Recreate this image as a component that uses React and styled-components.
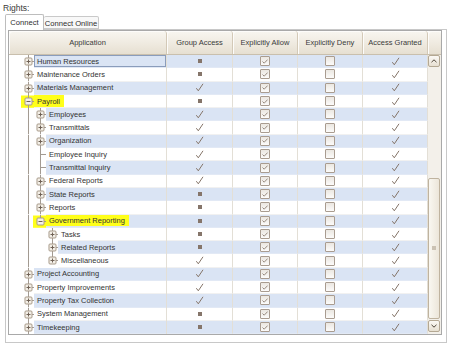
import React from "react";
import styled, { createGlobalStyle } from "styled-components";

const ROW_H = 13.3;

const rows = [
  { name: "Human Resources", level: 0, node: "plus", group: "part", focus: true },
  { name: "Maintenance Orders", level: 0, node: "plus", group: "part" },
  { name: "Materials Management", level: 0, node: "plus", group: "full" },
  { name: "Payroll", level: 0, node: "minus", group: "part", marked: true },
  { name: "Employees", level: 1, node: "plus", group: "full", guides: [true] },
  { name: "Transmittals", level: 1, node: "plus", group: "full", guides: [true] },
  { name: "Organization", level: 1, node: "plus", group: "full", guides: [true] },
  { name: "Employee Inquiry", level: 1, node: "leaf", group: "full", guides: [true] },
  { name: "Transmittal Inquiry", level: 1, node: "leaf", group: "full", guides: [true] },
  { name: "Federal Reports", level: 1, node: "plus", group: "full", guides: [true] },
  { name: "State Reports", level: 1, node: "plus", group: "part", guides: [true] },
  { name: "Reports", level: 1, node: "plus", group: "part", guides: [true] },
  { name: "Government Reporting", level: 1, node: "minus", group: "part", guides: [true], marked: true, last: true },
  { name: "Tasks", level: 2, node: "plus", group: "part", guides: [true, false] },
  { name: "Related Reports", level: 2, node: "plus", group: "part", guides: [true, false] },
  { name: "Miscellaneous", level: 2, node: "plus", group: "full", guides: [true, false], last: true },
  { name: "Project Accounting", level: 0, node: "plus", group: "full" },
  { name: "Property Improvements", level: 0, node: "plus", group: "full" },
  { name: "Property Tax Collection", level: 0, node: "plus", group: "full" },
  { name: "System Management", level: 0, node: "plus", group: "part" },
  { name: "Timekeeping", level: 0, node: "plus", group: "part" },
];

const GlobalStyle = createGlobalStyle`
  body {
    margin: 0;
    background: #ffffff;
    font-family: "Liberation Sans", Arial, sans-serif;
    color: #333333;
  }
`;

const Page = styled.div`
  padding: 3px 3px 0 3px;
  width: 449px;
  box-sizing: border-box;
`;

const Caption = styled.div`
  font-size: 8.5px;
  line-height: 11px;
  height: 11px;
  color: #3a3a3a;
`;

const TabStrip = styled.div`
  display: flex;
  align-items: flex-end;
  height: 15px;
  padding-left: 2px;
`;

const Tab = styled.div`
  position: relative;
  z-index: ${(p) => (p.$active ? 1 : 0)};
  box-sizing: border-box;
  height: ${(p) => (p.$active ? "16px" : "13px")};
  margin-bottom: ${(p) => (p.$active ? "-1px" : "0")};
  width: ${(p) => p.$w}px;
  border: 1px solid ${(p) => (p.$active ? "#bdbdbd" : "#c9c9c9")};
  border-bottom: ${(p) => (p.$active ? "none" : "1px solid #c9c9c9")};
  border-left: ${(p) => (p.$active ? "1px solid #bdbdbd" : "none")};
  border-radius: 2px 2px 0 0;
  background: ${(p) => (p.$active ? "#ffffff" : "#f8f8f8")};
  font-size: 7.6px;
  color: #2e2e2e;
  display: flex;
  align-items: center;
  justify-content: center;
  padding-top: ${(p) => (p.$active ? "0" : "1px")};
`;

const Panel = styled.div`
  margin-left: 2px;
  width: 442px;
  box-sizing: border-box;
  border: 1px solid #c8c8c8;
  padding: 0 3px 7px 2px;
`;

const GridBox = styled.div`
  border: 1px solid #a9a9a9;
  width: 434px;
  box-sizing: border-box;
`;

const HeaderRow = styled.div`
  display: grid;
  grid-template-columns: 158px 66px 65px 65px 65px 13px;
  height: 24px;
  box-sizing: border-box;
  border-bottom: 1px solid #c9bfad;
`;

const HeaderCell = styled.div`
  display: flex;
  align-items: center;
  justify-content: center;
  font-size: 7.5px;
  color: #3a3a3a;
  background: linear-gradient(#f8f6f0, #efeae0 55%, #e6dfd1);
  border-right: 1px solid #d3c9b7;
  box-shadow: inset 1px 1px 0 #fdfcfa;
  border-radius: 3px 3px 0 0;
  &:last-child {
    border-right: none;
  }
`;

const Body = styled.div`
  display: flex;
`;

const RowList = styled.div`
  width: 419px;
`;

const Row = styled.div`
  display: grid;
  grid-template-columns: 158px 66px 65px 65px 65px;
  height: ${ROW_H}px;
`;

const AppCell = styled.div`
  display: flex;
  border-right: 1px solid #e3dfd6;
  min-width: 0;
`;

const TextCell = styled.div`
  flex: 1;
  display: flex;
  align-items: stretch;
  background: ${(p) => (p.$alt ? "#dae4f4" : "#ffffff")};
  box-shadow: ${(p) => (p.$focus ? "inset 0 0 0 1px #8a9cbb" : "none")};
  border-bottom: 1px solid ${(p) => (p.$alt ? "#e2e9f5" : "#f1f1f1")};
  box-sizing: border-box;
`;

const Label = styled.span`
  display: flex;
  align-items: center;
  margin: 0.5px 0;
  padding: 0 4px 0 3px;
  font-size: 7.5px;
  white-space: nowrap;
  color: #333333;
  background: ${(p) => (p.$marked ? "#ffff1a" : "transparent")};
`;

const ValueCell = styled.div`
  display: flex;
  align-items: center;
  justify-content: center;
  background: ${(p) => (p.$alt ? "#dae4f4" : "#ffffff")};
  border-right: 1px solid #e3dfd6;
  border-bottom: 1px solid ${(p) => (p.$alt ? "#e2e9f5" : "#f1f1f1")};
  box-sizing: border-box;
`;

const Square = styled.span`
  width: 4px;
  height: 4px;
  background: #85756a;
`;

const CheckBox = styled.span`
  width: 10px;
  height: 10px;
  box-sizing: border-box;
  border: 1px solid #a99c90;
  border-radius: 1px;
  background: linear-gradient(#ebe7e1, #fcfbfa);
  display: flex;
  align-items: center;
  justify-content: center;
`;

const ScrollBar = styled.div`
  width: 13px;
  display: flex;
  flex-direction: column;
  background: #f3f0ea;
  padding: 0 1px 2px 0;
  box-sizing: border-box;
`;

const ScrollButton = styled.div`
  width: 12px;
  height: 12px;
  box-sizing: border-box;
  border: 1px solid #b4a893;
  border-radius: 2px;
  background: linear-gradient(#fbf9f5, #e7e0d2);
  display: flex;
  align-items: center;
  justify-content: center;
`;

const Track = styled.div`
  flex: 1;
  display: flex;
  flex-direction: column;
  padding-top: 111px;
`;

const Thumb = styled.div`
  height: 141px;
  width: 12px;
  box-sizing: border-box;
  border: 1px solid #bfb39f;
  border-radius: 2px;
  background: linear-gradient(90deg, #f9f7f1, #ece6da);
  display: flex;
  align-items: center;
  justify-content: center;
`;

const Grip = styled.span`
  width: 4px;
  height: 4px;
  background: #cbc2b3;
  margin-top: -2px;
`;

const Tick = () => (
  <svg width="9" height="9" viewBox="0 0 9 9">
    <path d="M1.3 5.2 L3.3 7.8 L8 0.8" fill="none" stroke="#857569" strokeWidth="1" />
  </svg>
);

const SmallCheck = () => (
  <svg width="6" height="5" viewBox="0 0 6 5">
    <path d="M0.5 2.5 L2.2 4.2 L5.6 0.6" fill="none" stroke="#8c7e72" strokeWidth="0.9" />
  </svg>
);

const Chevron = ({ down }) => (
  <svg width="6" height="4" viewBox="0 0 6 4">
    <path d={down ? "M0.5 0.8 L3 3.2 L5.5 0.8" : "M0.5 3.2 L3 0.8 L5.5 3.2"} fill="none" stroke="#4e4538" strokeWidth="1" />
  </svg>
);

const TreeGraphic = ({ row }) => {
  const w = 25 + 12 * row.level;
  const h = ROW_H;
  const mid = 6.5;
  const cx = 19.5 + 12 * row.level;
  const guides = row.guides || [];
  const line = "#a29a91";
  return (
    <svg width={w} height={h} viewBox={`0 0 ${w} ${h}`} style={{ flexShrink: 0, display: "block" }}>
      {row.marked && <rect x={cx - 7.5} y="0.5" width={w - cx + 7.5} height={h - 1} fill="#ffff1a" />}
      {guides.map((on, i) =>
        on ? <line key={i} x1={19.5 + 12 * i} y1="0" x2={19.5 + 12 * i} y2={h} stroke={line} strokeWidth="1" /> : null
      )}
      <line x1={cx} y1="0" x2={cx} y2={row.last ? mid : h} stroke={line} strokeWidth="1" />
      <line x1={cx} y1={mid} x2={w} y2={mid} stroke={line} strokeWidth="1" />
      {row.node !== "leaf" && (
        <g>
          <rect x={cx - 3.5} y={mid - 3.5} width="7" height="7" rx="1" fill="#f4f0e8" stroke="#a79a89" strokeWidth="1" />
          <line x1={cx - 2} y1={mid} x2={cx + 2} y2={mid} stroke="#6f6154" strokeWidth="1" />
          {row.node === "plus" && <line x1={cx} y1={mid - 2} x2={cx} y2={mid + 2} stroke="#6f6154" strokeWidth="1" />}
        </g>
      )}
    </svg>
  );
};

const headers = ["Application", "Group Access", "Explicitly Allow", "Explicitly Deny", "Access Granted", ""];

const App = () => {
  return (
    <>
      <GlobalStyle />
      <Page>
        <Caption>Rights:</Caption>
        <TabStrip>
          <Tab $active $w={39}>Connect</Tab>
          <Tab $w={55}>Connect Online</Tab>
        </TabStrip>
        <Panel>
          <GridBox>
            <HeaderRow>
              {headers.map((h, i) => (
                <HeaderCell key={i}>{h}</HeaderCell>
              ))}
            </HeaderRow>
            <Body>
              <RowList>
                {rows.map((r, i) => {
                  const alt = i % 2 === 0;
                  return (
                    <Row key={r.name}>
                      <AppCell>
                        <TreeGraphic row={r} />
                        <TextCell $alt={alt} $focus={r.focus}>
                          <Label $marked={r.marked}>{r.name}</Label>
                        </TextCell>
                      </AppCell>
                      <ValueCell $alt={alt}>{r.group === "full" ? <Tick /> : <Square />}</ValueCell>
                      <ValueCell $alt={alt}>
                        <CheckBox>
                          <SmallCheck />
                        </CheckBox>
                      </ValueCell>
                      <ValueCell $alt={alt}>
                        <CheckBox />
                      </ValueCell>
                      <ValueCell $alt={alt}>
                        <Tick />
                      </ValueCell>
                    </Row>
                  );
                })}
              </RowList>
              <ScrollBar>
                <ScrollButton>
                  <Chevron />
                </ScrollButton>
                <Track>
                  <Thumb>
                    <Grip />
                  </Thumb>
                </Track>
                <ScrollButton>
                  <Chevron down />
                </ScrollButton>
              </ScrollBar>
            </Body>
          </GridBox>
        </Panel>
      </Page>
    </>
  );
};

export default App;
